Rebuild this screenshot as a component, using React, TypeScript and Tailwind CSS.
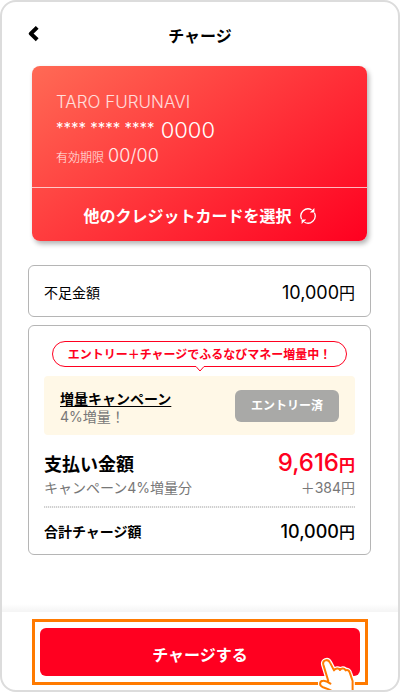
const ASTERISKS = '**** **** ****';

function BackIcon() {
  return (
    <svg className="w-3 h-4" viewBox="0 0 12 16" fill="none" stroke="#000" strokeWidth="4">
      <path strokeLinejoin="round" strokeLinecap="butt" d="M9.2 1.4L2.8 7.6l6.4 6.2" />
    </svg>
  );
}

function ChangeIcon() {
  return (
    <svg className="w-4 h-4" viewBox="0 0 16 16" fill="none" stroke="#fff" strokeWidth="1.3">
      <path d="M1.6 11.2A7.2 7.2 0 0 1 11.6 1.8" />
      <path d="M14.4 4.8A7.2 7.2 0 0 1 4.4 14.2" />
      <path d="M14.4 0v4.6H9.8z" fill="#fff" stroke="none" />
      <path d="M1.6 16v-4.6h4.6z" fill="#fff" stroke="none" />
    </svg>
  );
}

function HandPointer() {
  const hand =
    'M10.3 24L5.3 7.6C4.2 3.4 9.9 1.2 12 5.6L16 13.4C17 11.2 21 10.6 22 13C23.2 10.8 26.8 11 27.6 13.4C29.6 12.4 31.2 13.6 31.8 15.6L34.6 24V36H16C14.6 33.4 9.4 31.6 5 30.2C.8 28.6 1.4 24 5.2 23.8C7.4 23.6 9 24.2 12.4 26.6';
  return (
    <svg
      className="absolute right-[7px] -bottom-[9px] w-10 h-[34px] pointer-events-none"
      viewBox="0 0 40 34"
      fill="none"
      strokeLinecap="round"
      strokeLinejoin="round"
    >
      <path d={hand} stroke="#fff" strokeWidth="4.5" fill="#fff" />
      <path d={hand} stroke="#ff7a00" strokeWidth="2" fill="#fff" />
    </svg>
  );
}

export default function App() {
  return (
    <div className="min-h-screen flex flex-col bg-white border-2 border-[#dcdcdc] rounded-2xl overflow-hidden text-black font-[Inter,'Noto_Sans_CJK_JP',sans-serif]">
      <header className="grid grid-cols-[1fr_auto_1fr] items-center h-16 pt-1 px-[26px]">
        <button type="button" aria-label="戻る" className="justify-self-start pb-1">
          <BackIcon />
        </button>
        <h1 className="text-base font-bold">チャージ</h1>
      </header>

      <main className="flex-1 pl-[26px] pr-[27px]">
        <section className="mx-1 rounded-lg text-white shadow-[2px_3px_5px_rgba(0,0,0,0.3)] bg-[linear-gradient(145deg,#ff6a55_0%,#ff0020_100%)]">
          <div className="h-[121px] px-6 pt-6">
            <p className="text-[17px] leading-6 font-light text-white/80">TARO FURUNAVI</p>
            <p className="flex items-center gap-1.5 leading-8">
              <span className="pb-1 text-[15px] leading-7">{ASTERISKS}</span>
              <span className="text-[22px] font-light">0000</span>
            </p>
            <p className="flex items-baseline gap-1 leading-5 text-white/90">
              <span className="text-xs font-light">有効期限</span>
              <span className="text-lg leading-5 font-light">00/00</span>
            </p>
          </div>
          <button
            type="button"
            className="flex w-full h-[54px] pt-0.5 items-center justify-center gap-2 border-t border-white/70 text-base font-bold"
          >
            他のクレジットカードを選択
            <ChangeIcon />
          </button>
        </section>

        <section className="flex h-[52px] items-center justify-between mt-6 px-[15px] pt-1 border border-[#b5b5b5] rounded-md">
          <span className="text-sm">不足金額</span>
          <span>
            <span className="text-lg">10,000</span>
            <span className="text-base">円</span>
          </span>
        </section>

        <section className="mt-2 px-[15px] pt-[15px] pb-3 border border-[#b5b5b5] rounded-md">
          <div className="relative flex h-[26px] mx-2 pt-0.5 items-center justify-center border border-[#ff0020] rounded-full text-xs font-bold text-[#ff0020] whitespace-nowrap">
            エントリー＋チャージでふるなびマネー増量中！
            <svg className="absolute top-6 left-1/2 w-2 h-1.5 -translate-x-1/2" viewBox="0 0 8 6">
              <path d="M0 0h8v.6L4 5 0 .6z" fill="#fff" />
              <path d="M0 .5l4 4.5L8 .5" fill="none" stroke="#ff0020" />
            </svg>
          </div>

          <div className="flex h-[59px] items-center justify-between mt-[9px] px-4 rounded bg-[#fff8e7]">
            <div className="pt-1 text-sm leading-[18px]">
              <a href="#" className="font-bold underline underline-offset-2">
                増量キャンペーン
              </a>
              <p className="text-[#777]">4%増量！</p>
            </div>
            <button type="button" disabled className="w-[104px] h-8 rounded-md bg-[#a9a9a7] text-xs font-bold text-white">
              エントリー済
            </button>
          </div>

          <dl>
            <div className="flex h-8 items-baseline justify-between mt-3 leading-8">
              <dt className="text-lg leading-8 font-bold">支払い金額</dt>
              <dd className="text-[#ff0020]">
                <span className="text-2xl leading-8 font-medium">9,616</span>
                <span className="text-base font-bold">円</span>
              </dd>
            </div>
            <div className="flex justify-between text-sm leading-[18px] text-[#777]">
              <dt>キャンペーン4%増量分</dt>
              <dd>＋384円</dd>
            </div>
            <div className="h-0.5 mt-[9px] bg-[repeating-linear-gradient(90deg,#d0d0d0_0_1px,#f4f4f4_1px_2px)]" />
            <div className="flex h-[34px] items-center justify-between pt-3.5">
              <dt className="text-sm font-bold">合計チャージ額</dt>
              <dd className="font-medium">
                <span className="text-lg">10,000</span>
                <span className="text-base">円</span>
              </dd>
            </div>
          </dl>
        </section>
      </main>

      <div className="h-2 bg-linear-to-b from-white to-[#f4f4f4]" />
      <footer className="px-[30px] pt-[7px] pb-[5px]">
        <div className="relative border-3 border-[#ff7a00] px-[5px] py-1.5">
          <button type="button" className="w-full h-12 pt-1.5 rounded-md bg-[#ff0020] text-base font-bold text-white">
            チャージする
          </button>
          <HandPointer />
        </div>
      </footer>
    </div>
  );
}
